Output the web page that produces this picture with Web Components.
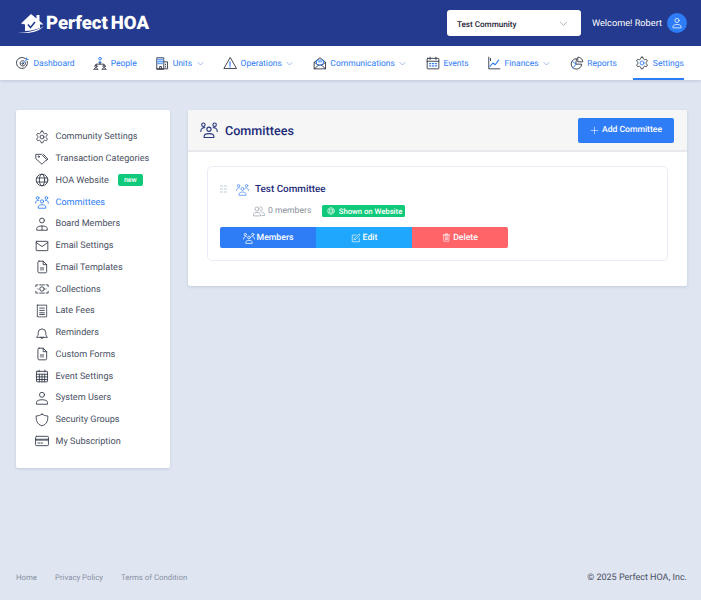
<!DOCTYPE html>
<html>
<head>
<meta charset="utf-8">
<title>Perfect HOA</title>
<style>
    html, body { margin: 0; padding: 0; }
    body { background: #dfe5f1; font-family: Roboto, "Liberation Sans", sans-serif; text-rendering: geometricPrecision; }
    #app { display: flex; flex-direction: column; min-height: 600px; }
    #content { flex: 1; display: flex; align-items: flex-start; gap: 18px; padding: 30px 14px 0 16px; }
</style>
</head>
<body>
<div id="app">
    <app-header></app-header>
    <top-nav>
        <nav-item icon="target" label="Dashboard"></nav-item>
        <nav-item icon="org" label="People"></nav-item>
        <nav-item icon="building" label="Units" caret></nav-item>
        <nav-item icon="warning" label="Operations" caret></nav-item>
        <nav-item icon="mailopen" label="Communications" caret></nav-item>
        <nav-item icon="calendar" label="Events"></nav-item>
        <nav-item icon="chart" label="Finances" caret></nav-item>
        <nav-item icon="pie" label="Reports"></nav-item>
        <nav-item icon="gear" label="Settings" active></nav-item>
    </top-nav>
    <div id="content">
        <side-menu>
            <side-item icon="gear" label="Community Settings"></side-item>
            <side-item icon="tag" label="Transaction Categories"></side-item>
            <side-item icon="globe" label="HOA Website" badge="new"></side-item>
            <side-item icon="people" label="Committees" active></side-item>
            <side-item icon="board" label="Board Members"></side-item>
            <side-item icon="mail" label="Email Settings"></side-item>
            <side-item icon="file" label="Email Templates"></side-item>
            <side-item icon="cash" label="Collections"></side-item>
            <side-item icon="receipt" label="Late Fees"></side-item>
            <side-item icon="bell" label="Reminders"></side-item>
            <side-item icon="file" label="Custom Forms"></side-item>
            <side-item icon="grid" label="Event Settings"></side-item>
            <side-item icon="user" label="System Users"></side-item>
            <side-item icon="shield" label="Security Groups"></side-item>
            <side-item icon="card" label="My Subscription"></side-item>
        </side-menu>
        <main-panel heading="Committees">
            <committee-card name="Test Committee" members="0 members"></committee-card>
        </main-panel>
    </div>
    <page-footer></page-footer>
</div>

<script>
"use strict";

// every icon sits on a 24x24 box and takes its colour from currentColor
const ICONS = {
    target: '<path d="M17 5.2A9.5 9.5 0 1 0 19.3 9"/><path d="M13.6 8.4A4.6 4.6 0 1 0 16 11"/><circle cx="11.5" cy="13" r="1.4"/><path d="M12 12.6 19 5.5M18 3l.4 2.6 2.6.4" stroke="#2e7cf6"/>',
    org: '<circle cx="12" cy="4.5" r="2.3" stroke="#2e7cf6"/><path d="M10 11c0-3 4-3 4 0z" stroke="#2e7cf6"/><path d="M12 11v3M5 16v-2h14v2"/><circle cx="5" cy="17.5" r="2"/><path d="M1.5 23c0-3.5 7-3.5 7 0z"/><circle cx="19" cy="17.5" r="2"/><path d="M15.5 23c0-3.5 7-3.5 7 0z"/>',
    building: '<path d="M3 22V3h12v19z"/><path d="M4.500 6h9M4.500 9.500h9M4.500 13h9" stroke="#6aa5f8" stroke-width="2.600"/><path d="M15 10h6.500v12H3M8 22v-4h3v4M18 14v1M18 18v1"/>',
    warning: '<path d="M12 3 1.500 21.500h21z"/><path d="M12 10v6" stroke="#2e7cf6" stroke-width="2"/><path d="M12 18v1" stroke="#2e7cf6" stroke-width="2"/>',
    mailopen: '<path d="M2.500 10.500 12 3l9.500 7.500V22h-19z"/><path d="M2.500 22l7-6.500M21.500 22l-7-6.500M2.500 11 9 15.500h6l6.500-4.500"/><path d="M6 13V7h12v6l-6 3z" stroke="#2e7cf6"/><path d="M9 10h6" stroke="#2e7cf6"/>',
    calendar: '<rect x="2" y="4" width="20" height="18" rx="1"/><path d="M2 9h20M7 2v4M17 2v4"/><path d="M6 13h2M11 13h2M16 13h2M6 17h2M11 17h2M16 17h2" stroke="#2e7cf6" stroke-width="2"/>',
    chart: '<path d="M3 2v20h19"/><path d="M5 18l5-6 4 3 6-8" stroke="#2e7cf6" stroke-width="2"/><path d="M6 4v4"/>',
    pie: '<path d="M10.500 4.500A9 9 0 1 0 20 14h-9.500z"/><path d="M14 2a8 8 0 0 1 8 8h-8z"/><path d="M10.500 14 5 20.500M10.500 14 4 9.500" stroke="#2e7cf6"/>',
    gear: '<circle cx="12" cy="12" r="3.300" class="hub"/><path d="M12.220 2h-.44a2 2 0 0 0-2 2v.18a2 2 0 0 1-1 1.730l-.43.25a2 2 0 0 1-2 0l-.15-.08a2 2 0 0 0-2.730.73l-.22.38a2 2 0 0 0 .73 2.730l.15.1a2 2 0 0 1 1 1.720v.51a2 2 0 0 1-1 1.740l-.15.09a2 2 0 0 0-.73 2.730l.22.38a2 2 0 0 0 2.730.73l.15-.08a2 2 0 0 1 2 0l.43.25a2 2 0 0 1 1 1.730V20a2 2 0 0 0 2 2h.44a2 2 0 0 0 2-2v-.18a2 2 0 0 1 1-1.730l.43-.25a2 2 0 0 1 2 0l.15.08a2 2 0 0 0 2.730-.73l.22-.39a2 2 0 0 0-.73-2.730l-.15-.08a2 2 0 0 1-1-1.740v-.5a2 2 0 0 1 1-1.740l.15-.09a2 2 0 0 0 .73-2.730l-.22-.38a2 2 0 0 0-2.730-.73l-.15.08a2 2 0 0 1-2 0l-.43-.25a2 2 0 0 1-1-1.730V4a2 2 0 0 0-2-2z"/>',
    tag: '<path d="M2 4h9l9 9-8 8-10-9z"/><path d="M14 3.500l8 8.500-2 2.500"/><circle cx="6.500" cy="8" r="1.200"/>',
    globe: '<circle cx="12" cy="12" r="10"/><ellipse cx="12" cy="12" rx="4.500" ry="10"/><path d="M2.800 8.500h18.400M2.800 15.500h18.400"/>',
    people: '<circle cx="12" cy="11" r="2.800"/><path d="M5.500 22v-1.500c0-5 13-5 13 0V22z"/><circle cx="4.500" cy="5" r="2.300"/><circle cx="19.500" cy="5" r="2.300"/><path d="M1 14c0-4 3-5.500 5.500-5M23 14c0-4-3-5.500-5.500-5"/>',
    board: '<circle cx="12" cy="6" r="4.200"/><path d="M3 22v-2.500c0-5.500 18-5.500 18 0V22z"/><path d="M12 15.500V22"/>',
    mail: '<rect x="2" y="4" width="20" height="16" rx="1"/><path d="M2 6l10 7 10-7"/>',
    file: '<path d="M7 2h7l6 6v12a2 2 0 0 1-2 2H7a2 2 0 0 1-2-2V4a2 2 0 0 1 2-2z"/><path d="M14 2v6h6"/><rect x="8.500" y="12" width="7" height="6" fill="currentColor" fill-opacity=".45" stroke="none"/>',
    cash: '<path d="M5 5H1.500v3M19 5h3.500v3M1.500 16v3H5M22.500 16v3H19M8 5h8M8 19h8"/><circle cx="12" cy="12" r="3.800"/><path d="M5 12h.5M18.500 12h.5"/>',
    receipt: '<path d="M4 2h16v20H4z" stroke-dasharray="2 1.500"/><path d="M8 7h8M8 11h8M8 15h8M8 18h8"/>',
    bell: '<path d="M3 19c2-2 2.500-3 2.500-7.500a6.500 6.500 0 0 1 13 0C18.500 16 19 17 21 19z"/><path d="M10 19a2 2.500 0 0 0 4 0"/>',
    grid: '<rect x="2.500" y="4" width="19" height="18" rx="1"/><path d="M2.500 9h19M2.500 13.500h19M2.500 18h19M7.500 9v13M12 9v13M16.500 9v13M7 2v3M17 2v3"/>',
    user: '<circle cx="12" cy="6.500" r="4.300"/><path d="M2.500 22v-2.500c0-6 19-6 19 0V22z"/>',
    shield: '<path d="M12 2c3 2 6 3 10 3 0 8-1 14-10 17C3 19 2 13 2 5c4 0 7-1 10-3z"/>',
    card: '<rect x="1" y="4" width="22" height="16" rx="1.500"/><path d="M1 9h22M1 10.500h22M5 15.500h3M10 15.500h3"/>',
    chevron: '<path d="M5 9l7 7 7-7"/>',
    avatar: '<circle cx="12" cy="7" r="4.200"/><path d="M4 21v-2c0-5.500 16-5.500 16 0v2z"/>',
    plus: '<path d="M12 3v18M3 12h18"/>',
    edit: '<path d="M20 13v8H3V5h9"/><path d="M9 12 19 2l3 3-10 10-4 1z"/>',
    trash: '<path d="M5 6h14l-1 16H6zM3 5h18M9 2h6v3h-6zM9 10v8M12 10v8M15 10v8"/>',
    members: '<circle cx="8" cy="8" r="4"/><path d="M1 21v-2c0-5.500 14-5.500 14 0v2z"/><path d="M14 3.500a4 4 0 0 1 1 8M17 14c3.500.3 6 2 6 5v2h-5"/>'
};

function icon(name, size) {
    return `<svg width="${size}" height="${size}" viewBox="0 0 24 24" fill="none" stroke="currentColor" stroke-width="1.500" stroke-linecap="round" stroke-linejoin="round" aria-hidden="true">${ICONS[name]}</svg>`;
}

class AppHeader extends HTMLElement {
    constructor() {
        super();
        this.attachShadow({ mode: 'open' });
        this.shadowRoot.innerHTML = `
        <style>
            :host { display: flex; align-items: center; justify-content: space-between; height: 46px; padding: 0 14px 0 18px; background: #233a8e; color: #fff; }
            .logo { display: flex; align-items: center; }
            .logo b { font-size: 18.500px; font-weight: 900; word-spacing: -1.500px; }
            .right { display: flex; align-items: center; }
            .select { display: flex; align-items: center; justify-content: space-between; box-sizing: border-box; width: 134px; height: 26px; padding: 0 12px 0 10px; background: #fff; color: #1b2233; border-radius: 3px; font-size: 8.100px; font-weight: 500; }
            .select span { padding-top: 1px; }
            .select svg { color: #8a93a3; }
            .welcome { margin: 0 5px 0 11px; font-size: 9.200px; }
            .avatar { display: flex; align-items: center; justify-content: center; width: 20px; height: 20px; border-radius: 50%; background: #2e7cf6; }
        </style>
        <div class="logo">
            <svg width="28" height="22" viewBox="0 0 28 22" aria-hidden="true">
                <path d="M3 11.500 13 2l5.500 4.500V3h3v6l4 3.500h-3.500v3.500c-4 1.500-9 2.800-15 3V12.500z" fill="#fff"/>
                <path d="M10 12.500l2.500 3L17 10" fill="none" stroke="#233a8e" stroke-width="1.500"/>
                <path d="M0 20.500c9 .8 19-2 26-6.500-5 5.500-15 8.500-26 6.500z" fill="#fff"/>
            </svg>
            <b>Perfect HOA</b>
        </div>
        <div class="right">
            <div class="select"><span>Test Community</span>${icon('chevron', 11)}</div>
            <span class="welcome">Welcome! Robert</span>
            <span class="avatar">${icon('avatar', 12)}</span>
        </div>`;
    }
}

class TopNav extends HTMLElement {
    constructor() {
        super();
        this.attachShadow({ mode: 'open' });
        this.shadowRoot.innerHTML = `
        <style>
            :host { display: flex; justify-content: space-between; height: 34px; padding: 0 17px 0 16px; background: #fff; box-shadow: 0 1px 3px rgba(40,60,110,.18); }
        </style>
        <slot></slot>`;
    }
}

class NavItem extends HTMLElement {
    constructor() {
        super();
        this.attachShadow({ mode: 'open' });
        const caret = this.hasAttribute('caret') ? `<span class="caret">${icon('chevron', 9)}</span>` : '';
        this.shadowRoot.innerHTML = `
        <style>
            :host { display: flex; align-items: center; gap: 3.500px; height: 34px; box-sizing: border-box; color: #2e7cf6; font-size: 8.500px; }
            :host([active]) { margin-left: -2px; padding: 2px 0 0 2px; border-bottom: 2px solid #2e7cf6; }
            .ico { display: flex; color: #2b3040; }
            .label { padding-top: 1px; }
            .hub { stroke: #2e7cf6; }
            .caret { display: flex; color: #5b8fe0; }
        </style>
        <span class="ico">${icon(this.getAttribute('icon'), 14)}</span>
        <span class="label">${this.getAttribute('label')}</span>${caret}`;
    }
}

class SideMenu extends HTMLElement {
    constructor() {
        super();
        this.attachShadow({ mode: 'open' });
        this.shadowRoot.innerHTML = `
        <style>
            :host { display: block; flex: none; box-sizing: border-box; width: 154px; padding: 16px 0 16px 18px; background: #fff; border-radius: 2px; box-shadow: 0 1px 3px rgba(40,60,110,.15); }
        </style>
        <slot></slot>`;
    }
}

class SideItem extends HTMLElement {
    constructor() {
        super();
        this.attachShadow({ mode: 'open' });
        const badge = this.getAttribute('badge');
        this.shadowRoot.innerHTML = `
        <style>
            :host { display: flex; align-items: center; height: 21.750px; color: #4a5163; font-size: 9.100px; }
            :host([active]) { color: #2e7cf6; }
            .ico { display: flex; justify-content: center; flex: none; width: 16px; margin-right: 5.500px; color: #333a4a; }
            :host([active]) .ico { color: #2e7cf6; }
            .label { padding-top: 1px; }
            .badge { margin-left: 9px; padding: 0 6px; height: 12px; line-height: 12px; border-radius: 2px; background: #0fca7a; color: #fff; font-size: 7px; font-weight: 500; }
        </style>
        <span class="ico">${icon(this.getAttribute('icon'), 14)}</span>
        <span class="label">${this.getAttribute('label')}</span>
        ${badge ? `<span class="badge">${badge}</span>` : ''}`;
    }
}

class MainPanel extends HTMLElement {
    constructor() {
        super();
        this.attachShadow({ mode: 'open' });
        this.shadowRoot.innerHTML = `
        <style>
            :host { display: block; flex: 1; background: #fff; border-radius: 2px; box-shadow: 0 1px 3px rgba(40,60,110,.15); }
            header { display: flex; align-items: center; justify-content: space-between; box-sizing: border-box; height: 42px; padding: 0 13px 0 12px; background: #f6f6f6; border-bottom: 2px solid #e7e9ec; border-radius: 2px 2px 0 0; }
            h1 { display: flex; align-items: center; gap: 7px; margin: 0; color: #1c2a78; font-size: 12.600px; font-weight: 500; }
            h1 span { padding-top: 2px; }
            h1 svg { color: #2b3a80; }
            button { display: flex; align-items: center; justify-content: center; gap: 3px; width: 96px; height: 25px; padding: 0; border: 0; border-radius: 2px; background: #2e7cf6; color: #fff; font: 500 8.600px Roboto, sans-serif; text-rendering: geometricPrecision; }
            .body { padding: 14px 19px 25px; }
        </style>
        <header>
            <h1>${icon('people', 18)}<span>${this.getAttribute('heading')}</span></h1>
            <button>${icon('plus', 9)}<span>Add Committee</span></button>
        </header>
        <div class="body"><slot></slot></div>`;
    }
}

class CommitteeCard extends HTMLElement {
    constructor() {
        super();
        this.attachShadow({ mode: 'open' });
        this.shadowRoot.innerHTML = `
        <style>
            :host { display: block; box-sizing: border-box; height: 95px; padding: 15px 12px 0; border: 1px solid #e8edf5; border-radius: 5px; }
            .title { display: flex; align-items: center; height: 14px; color: #1c2a78; font-size: 9.900px; font-weight: 500; }
            .grip { display: grid; grid-template-columns: 3px 3px; gap: .5px 1px; margin-right: 9px; }
            .grip i { width: 3px; height: 2.500px; background: #dfe5ee; }
            .title svg { margin-right: 6px; color: #5b93f0; }
            .meta { display: flex; align-items: center; height: 14px; margin: 8px 0 0 33px; color: #8b909c; font-size: 8.600px; }
            .meta > svg { margin-right: 3px; color: #9ea3ad; }
            .shown { display: flex; align-items: center; gap: 4px; height: 12px; margin-left: 10.500px; padding: 0 3px 0 5px; border-radius: 1.500px; background: #0fca7a; color: #fff; font-size: 7.700px; font-weight: 500; }
            .actions { display: grid; grid-template-columns: repeat(3, 96px); height: 21px; margin-top: 9px; }
            .actions span { display: flex; align-items: center; justify-content: center; gap: 2px; color: #fff; font-size: 8.700px; font-weight: 500; }
            .members { background: #2e7cf6; border-radius: 2px 0 0 2px; }
            .edit { background: #1ea7fd; }
            .delete { background: #ff6469; border-radius: 0 2px 2px 0; }
        </style>
        <div class="title">
            <span class="grip"><i></i><i></i><i></i><i></i><i></i><i></i></span>
            ${icon('people', 13)}<span>${this.getAttribute('name')}</span>
        </div>
        <div class="meta">
            ${icon('members', 12)}<span>${this.getAttribute('members')}</span>
            <span class="shown">${icon('globe', 8)}Shown on Website</span>
        </div>
        <div class="actions">
            <span class="members">${icon('people', 12)}Members</span>
            <span class="edit">${icon('edit', 10)}Edit</span>
            <span class="delete">${icon('trash', 9)}Delete</span>
        </div>`;
    }
}

class PageFooter extends HTMLElement {
    constructor() {
        super();
        this.attachShadow({ mode: 'open' });
        this.shadowRoot.innerHTML = `
        <style>
            :host { display: flex; align-items: center; justify-content: space-between; height: 46px; padding: 0 14px 0 16px; color: #8790a3; font-size: 7.800px; }
            nav { display: flex; gap: 18px; }
            .copy { color: #4a5163; font-size: 9px; padding-top: 1px; }
        </style>
        <nav><span>Home</span><span>Privacy Policy</span><span>Terms of Condition</span></nav>
        <span class="copy">© 2025 Perfect HOA, Inc.</span>`;
    }
}

customElements.define('app-header', AppHeader);
customElements.define('top-nav', TopNav);
customElements.define('nav-item', NavItem);
customElements.define('side-menu', SideMenu);
customElements.define('side-item', SideItem);
customElements.define('main-panel', MainPanel);
customElements.define('committee-card', CommitteeCard);
customElements.define('page-footer', PageFooter);
</script>
</body>
</html>
